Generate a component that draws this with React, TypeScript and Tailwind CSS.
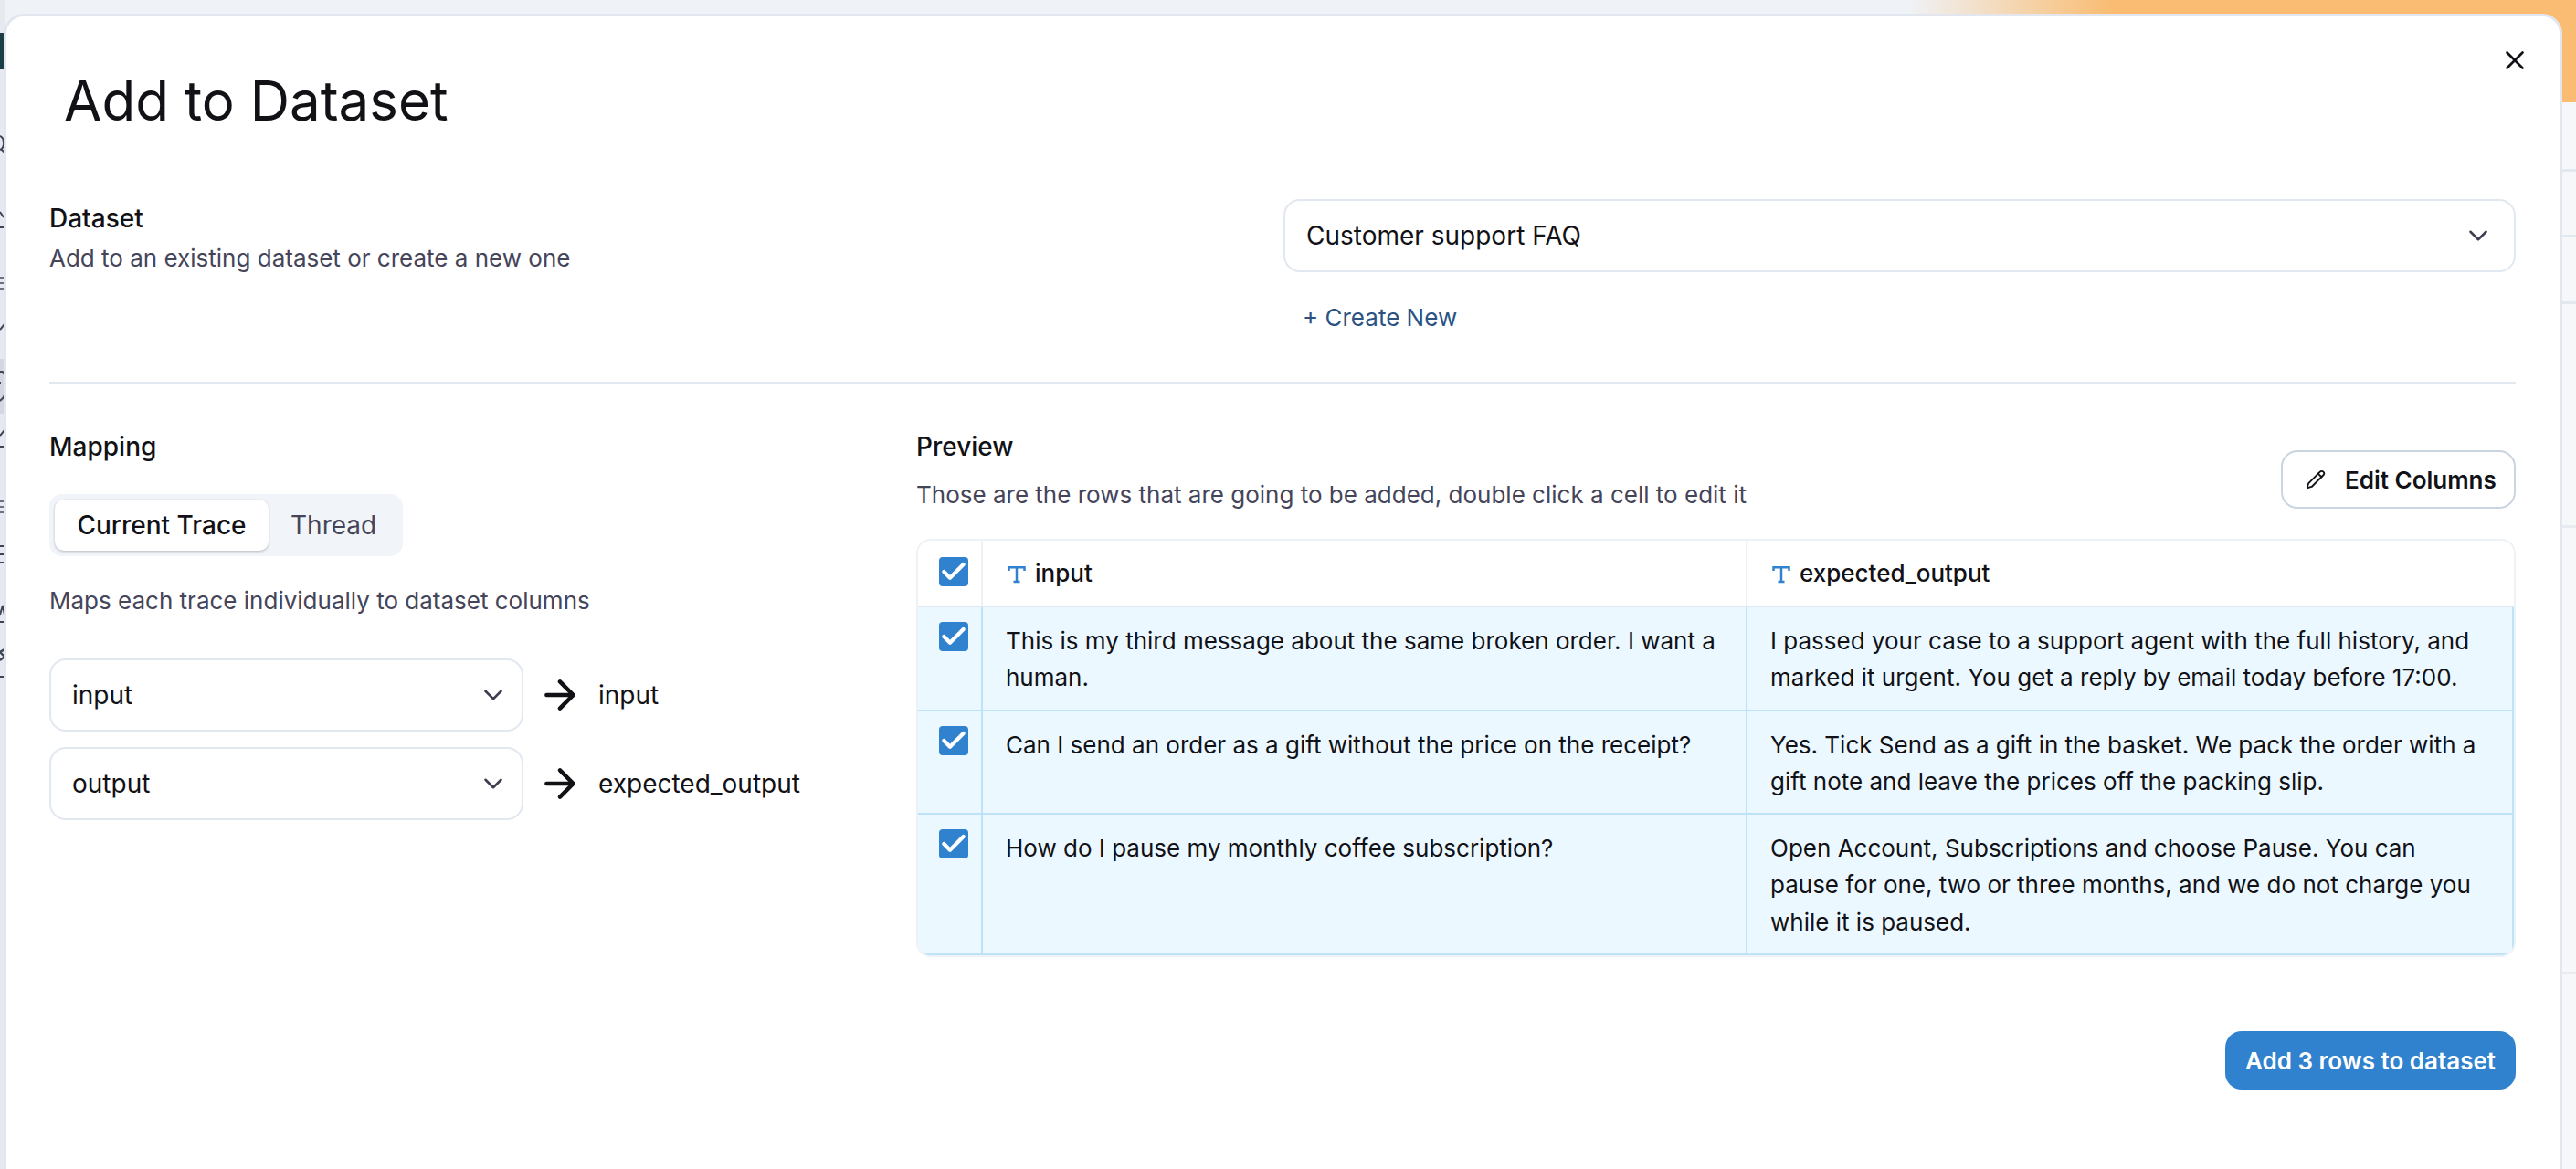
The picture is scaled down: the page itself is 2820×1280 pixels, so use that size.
import React from "react";
import { ArrowRight, ChevronDown, Pencil, X, Check } from "lucide-react";

function TypeGlyph() {
  return (
    <svg width="20" height="20" viewBox="0 0 20 20" fill="none" stroke="#3182ce" strokeWidth="2.5" className="shrink-0">
      <path d="M1.5 6V2.2h17V6M10 2.2V18M6.5 18h7" />
    </svg>
  );
}

function Box() {
  return (
    <span className="flex h-[32px] w-[32px] items-center justify-center rounded-[4px] bg-[#3182ce]">
      <Check size={32} color="#ffffff" strokeWidth={3.2} />
    </span>
  );
}

function Select({ label, big }: { label: string; big?: boolean }) {
  return (
    <div className={`flex h-[80px] items-center justify-between rounded-[18px] border-2 border-[#e2e8f0] bg-white ${big ? "pl-[23px] pr-[22px]" : "pl-[23px] pr-[14px]"}`}>
      <span className="text-[28px] leading-[40px] text-[#111116]">{label}</span>
      <ChevronDown size={34} color="#3d3d52" strokeWidth={1.8} />
    </div>
  );
}

const rows = [
  {
    a: "This is my third message about the same broken order. I want a human.",
    b: "I passed your case to a support agent with the full history, and marked it urgent. You get a reply by email today before 17:00.",
  },
  {
    a: "Can I send an order as a gift without the price on the receipt?",
    b: "Yes. Tick Send as a gift in the basket. We pack the order with a gift note and leave the prices off the packing slip.",
  },
  {
    a: "How do I pause my monthly coffee subscription?",
    b: "Open Account, Subscriptions and choose Pause. You can pause for one, two or three months, and we do not charge you while it is paused.",
  },
];

function SideMarks() {
  return (
    <div className="flex h-full w-[5px] flex-col overflow-hidden bg-[#e6e9ef] pt-[36px]">
      <div className="h-[40px] w-full shrink-0 bg-[#1d3d47]" />
      <svg width="5" height="20" className="mt-[71px] shrink-0" fill="none" stroke="#3d4454" strokeWidth="2"><path d="M0 2c3 1 4 4 4 8s-1 6-4 7M1 16l4 4" /></svg>
      <svg width="5" height="20" className="mt-[63px] shrink-0" fill="none" stroke="#3d4454" strokeWidth="2"><path d="M0 2l4 6M0 19h5" /></svg>
      <svg width="5" height="14" className="mt-[53px] shrink-0" fill="none" stroke="#6b7280" strokeWidth="2"><path d="M0 1h5M0 7h5M0 13h5" /></svg>
      <svg width="5" height="16" className="mt-[30px] shrink-0" fill="none" stroke="#3d4454" strokeWidth="2"><path d="M0 14l5-6" /></svg>
      <div className="mt-[30px] flex h-[60px] w-full shrink-0 items-center bg-[#d3d7df]">
        <svg width="5" height="40" fill="none" stroke="#3d4454" strokeWidth="2"><path d="M0 4h2q3 0 3 4v20q0 4-3 6l-2 2M0 16h1" /></svg>
      </div>
      <svg width="5" height="25" className="mt-[12px] shrink-0" fill="none" stroke="#3d4454" strokeWidth="2"><path d="M0 12l5-6M0 24h5" /></svg>
      <svg width="5" height="14" className="mt-[58px] shrink-0" fill="none" stroke="#6b7280" strokeWidth="2"><path d="M0 1h5M0 7h5M0 13h5" /></svg>
      <svg width="5" height="20" className="mt-[35px] shrink-0" fill="none" stroke="#3d4454" strokeWidth="2"><path d="M0 1h5M0 10h5M0 19h5" /></svg>
      <svg width="5" height="26" className="mt-[40px] shrink-0" fill="none" stroke="#3d4454" strokeWidth="2"><path d="M0 16l3-10 2 10v8H0" /></svg>
      <svg width="5" height="14" className="mt-[27px] shrink-0" fill="none" stroke="#3d4454" strokeWidth="2.4"><path d="M5 1L0 4l5 5-5 4" /></svg>
      <svg width="5" height="3" className="mt-[16px] shrink-0" fill="none" stroke="#3d4454" strokeWidth="2"><path d="M0 1h5" /></svg>
    </div>
  );
}

export default function App() {
  return (
    <div className="relative h-[1280px] w-[2820px] overflow-hidden bg-[#f6f7f9] font-['Inter',sans-serif]">
      <div className="flex h-[112px] w-full bg-[linear-gradient(90deg,#eff3f8_0%,#eff3f8_74%,#f9bc72_82%,#f9bc72_100%)]" />
      <div className="absolute left-0 top-0 h-full"><SideMarks /></div>
      <div className="flex h-[1168px] w-full flex-col">
        <div className="h-[76px] border-b-[3px] border-[#e2e8f0]" />
        <div className="h-[72px] border-b-[3px] border-[#e2e8f0]" />
        <div className="h-[73px] border-b-[3px] border-[#e2e8f0]" />
        <div className="h-[245px] border-b-[3px] border-[#e8ebf0]" />
        <div className="h-[489px] border-b-[3px] border-[#e8ebf0]" />
      </div>

      <div className="absolute left-[4px] top-[15px] h-[1300px] w-[2801px] rounded-t-[22px] border-[3px] border-[#e2e6ef] bg-white pl-[47px] pr-[48px] text-[#111116]">
        <button className="absolute right-[31px] top-[30px] flex h-[36px] w-[36px] items-center justify-center">
          <X size={34} color="#111116" strokeWidth={1.9} />
        </button>

        <h1 className="ml-[16px] pt-[52px] text-[60px] font-normal leading-[80px]">Add to Dataset</h1>

        <section className="mt-[69px] flex h-[202px] items-start justify-between border-b-[3px] border-[#e2e8f0] pb-[50px]">
          <div>
            <div className="text-[28px] font-medium leading-[40px]">Dataset</div>
            <div className="mt-[4px] text-[26px] leading-[40px] text-[#45455a]">Add to an existing dataset or create a new one</div>
          </div>
          <div className="-mt-[1px] w-[1349px]">
            <Select label="Customer support FAQ" big />
            <div className="mt-[30px] pl-[21px] text-[26px] leading-[40px] text-[#2c5282]">+ Create New</div>
          </div>
        </section>

        <section className="flex pt-[48px]">
          <div className="w-[949px] shrink-0">
            <div className="text-[28px] font-medium leading-[40px]">Mapping</div>
            <div className="mt-[32px] inline-flex h-[68px] w-[387px] items-center rounded-[14px] bg-[#f1f5f9] pl-[6px]">
              <div className="flex h-[56px] w-[234px] items-center justify-center rounded-[10px] bg-white text-[28px] font-medium shadow-[0_1px_3px_rgba(0,0,0,0.25)]">Current Trace</div>
              <div className="pl-[24px] text-[28px] text-[#45455a]">Thread</div>
            </div>
            <div className="mt-[29px] text-[26px] leading-[40px] text-[#45455a]">Maps each trace individually to dataset columns</div>
            <div className="mt-[43px] flex flex-col gap-[17px]">
              <div className="flex items-center">
                <div className="w-[519px]"><Select label="input" /></div>
                <ArrowRight size={50} color="#111116" strokeWidth={2.2} className="ml-[15px]" />
                <span className="ml-[17px] text-[28px] leading-[40px]">input</span>
              </div>
              <div className="flex items-center">
                <div className="w-[519px]"><Select label="output" /></div>
                <ArrowRight size={50} color="#111116" strokeWidth={2.2} className="ml-[15px]" />
                <span className="ml-[17px] text-[28px] leading-[40px]">expected_output</span>
              </div>
            </div>
          </div>

          <div className="min-w-0 flex-1">
            <div className="flex items-end justify-between">
              <div>
                <div className="text-[28px] font-medium leading-[40px]">Preview</div>
                <div className="mt-[13px] text-[26px] leading-[40px] text-[#45455a]">Those are the rows that are going to be added, double click a cell to edit it</div>
              </div>
              <button className="mb-[5px] flex h-[64px] w-[257px] items-center rounded-[18px] border-2 border-[#cbd5e0] pl-[25px] text-[26px] font-semibold">
                <Pencil size={22} color="#111116" strokeWidth={2} />
                <span className="ml-[21px]">Edit Columns</span>
              </button>
            </div>

            <div className="mt-[28px] overflow-hidden rounded-[16px] border-2 border-[#edf2f7] text-[26px] leading-[40.3px]">
              <div className="grid h-[73px] grid-cols-[71px_837px_1fr] border-b-2 border-[#e2e8f0] bg-white font-medium">
                <div className="border-r-2 border-[#edf2f7] pl-[23px] pt-[18px]"><Box /></div>
                <div className="flex items-center gap-[10px] border-r-2 border-[#edf2f7] pl-[27px] pt-[2px]"><TypeGlyph />input</div>
                <div className="flex items-center gap-[10px] pl-[27px] pt-[2px]"><TypeGlyph />expected_output</div>
              </div>
              {rows.map((r, i) => (
                <div key={i} className="grid grid-cols-[71px_837px_1fr] border-b-2 border-r-2 border-[#bee3f8] bg-[#ebf8ff]">
                  <div className="border-r-2 border-[#bee3f8] pl-[23px] pt-[16px]"><Box /></div>
                  <div className="border-r-2 border-[#bee3f8] px-[25px] pb-[14px] pt-[17px]">{r.a}</div>
                  <div className="px-[25px] pb-[14px] pt-[17px]">{r.b}</div>
                </div>
              ))}
            </div>

            <div className="mt-[81px] flex justify-end">
              <button className="h-[64px] w-[318px] rounded-[18px] bg-[#3182ce] text-[26px] font-semibold text-white">Add 3 rows to dataset</button>
            </div>
          </div>
        </section>
      </div>
    </div>
  );
}
